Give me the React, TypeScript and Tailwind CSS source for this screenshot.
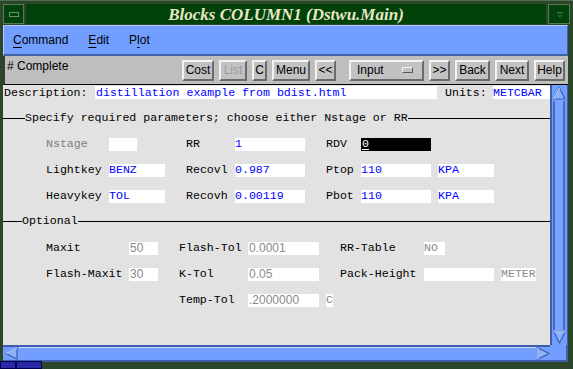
import React from "react";

const MONO = "font-['Liberation_Mono',monospace]";

function Btn({ className, children, disabled }: { className: string; children: React.ReactNode; disabled?: boolean }) {
  return (
    <div
      className={`h-[21px] flex items-center justify-center bg-[#c2c2c2] border-2 border-t-[#f2f2f2] border-l-[#f2f2f2] border-b-[#6a6a6a] border-r-[#6a6a6a] text-[12px] leading-none ${
        disabled ? "text-[#9c9c9c]" : "text-black"
      } ${className}`}
    >
      {children}
    </div>
  );
}

function Legend({ title, lead }: { title: string; lead: string }) {
  return (
    <div className="flex items-center h-[14px]">
      <div className={`h-px bg-black ${lead}`} />
      <span className="leading-none">{title}</span>
      <div className="flex-1 h-px bg-black" />
    </div>
  );
}

function Box({ className, children }: { className: string; children?: React.ReactNode }) {
  return <div className={`h-[13px] bg-white flex items-center leading-none overflow-hidden whitespace-nowrap ${className}`}>{children}</div>;
}

function Arrow({ dir }: { dir: "up" | "down" | "left" | "right" }) {
  const pts = {
    up: "6.5,1 12,12 1,12",
    down: "1,1 12,1 6.5,12",
    left: "1,6.5 12,1 12,12",
    right: "1,1 12,6.5 1,12",
  }[dir];
  return (
    <svg width="13" height="13" viewBox="0 0 13 13" className="shrink-0">
      <polygon points={pts} fill="#8fb2ff" stroke="#3f5fae" strokeWidth="1.2" />
      <polyline
        points={dir === "up" ? "1,12 6.5,1" : dir === "left" ? "1,6.5 12,1" : dir === "down" ? "1,1 12,1" : "1,12 1,1"}
        fill="none"
        stroke="#dce6ff"
        strokeWidth="1"
      />
    </svg>
  );
}

export default function App() {
  return (
    <div className="w-[573px] h-[369px] bg-[#2c462c] flex flex-col overflow-hidden relative font-['Liberation_Sans',Arial,sans-serif]">
      {/* title bar */}
      <div className="h-[25px] flex pt-[3px] pb-px px-[3px] border-t border-t-[#4f6f4f]">
        <div className="w-[21px] bg-[#00420a] border border-[#587858] flex items-center justify-center">
          <div className="w-[10px] h-[5px] border border-[#6f8f6f]" />
        </div>
        <div className="w-[2px]" />
        <div className="flex-1 bg-[#00420a] flex items-center justify-center text-[#e8e6c4] font-['Liberation_Serif',serif] italic font-bold text-[17px] leading-none">
          Blocks COLUMN1 (Dstwu.Main)
        </div>
        <div className="w-[2px]" />
        <div className="w-[22px] bg-[#00420a] border border-[#587858] flex items-center justify-center text-[7px] text-[#8aa28a] leading-none">
          ▽
        </div>
      </div>

      <div className="flex-1 flex flex-col pl-[3px] pr-[5px] pb-[7px] min-h-0">
        {/* menu bar */}
        <div className="h-[31px] shrink-0 bg-[#729fff] border-t border-l border-r border-b-2 border-t-[#b4cbff] border-l-[#b4cbff] border-r-[#41609f] border-b-[#41609f] flex items-center pl-[9px] gap-[20px] text-[12px] text-black">
          <span>
            <span className="underline underline-offset-[3px]">C</span>ommand
          </span>
          <span>
            <span className="underline underline-offset-[3px]">E</span>dit
          </span>
          <span>
            P<span className="underline underline-offset-[3px]">l</span>ot
          </span>
        </div>

        {/* toolbar */}
        <div className="h-[29px] shrink-0 bg-[#bebebe] border-l-2 border-l-[#3a3a3a] border-b border-b-black flex items-center pl-[2px] pr-[3px]">
          <div className="flex-1 text-[12px] text-black leading-none -mt-[9px]"># Complete</div>
          <div className="flex items-center gap-[5px]">
            <Btn className="w-[32px]">Cost</Btn>
            <Btn className="w-[28px]" disabled>
              List
            </Btn>
            <Btn className="w-[15px]">C</Btn>
            <Btn className="w-[38px]">Menu</Btn>
            <Btn className="w-[21px] text-[10px]">&lt;&lt;</Btn>
            <div className="ml-[8px] w-[75px] h-[21px] flex items-center bg-[#c2c2c2] border-2 border-t-[#f2f2f2] border-l-[#f2f2f2] border-b-[#6a6a6a] border-r-[#6a6a6a] text-[12px] leading-none pl-[6px] pr-[9px]">
              <span className="flex-1">Input</span>
              <div className="w-[11px] h-[6px] bg-[#c2c2c2] border border-t-[#f2f2f2] border-l-[#f2f2f2] border-b-[#5a5a5a] border-r-[#5a5a5a]" />
            </div>
            <Btn className="w-[21px] text-[10px]">&gt;&gt;</Btn>
            <Btn className="w-[35px]">Back</Btn>
            <Btn className="w-[34px]">Next</Btn>
            <Btn className="w-[31px]">Help</Btn>
          </div>
        </div>

        {/* content + vertical scrollbar */}
        <div className="flex-1 flex min-h-0">
          <div className={`flex-1 bg-[#e2e2e2] ${MONO} text-[11.6px] text-black flex flex-col`}>
            <div className="h-[15px] flex items-center">
              <div className="w-[92px] pl-px leading-none">Description:</div>
              <Box className="w-[342px] text-[#0000ff] pl-px">distillation example from bdist.html</Box>
              <div className="w-[56px] pl-[8px] leading-none">Units:</div>
              <Box className="flex-1 text-[#0000ff]">METCBAR</Box>
            </div>

            <div className="mt-[11px]">
              <Legend title="Specify required parameters; choose either Nstage or RR" lead="w-[22px]" />
            </div>

            <div className="mt-[6px] flex flex-col">
              <div className="h-[26px] flex items-center pl-[43px]">
                <div className="w-[63px] text-[#7f7f7f]">Nstage</div>
                <div className="w-[77px]">
                  <Box className="w-[28px]" />
                </div>
                <div className="w-[49px]">RR</div>
                <Box className="w-[70px] text-[#0000ff]">1</Box>
                <div className="w-[21px]" />
                <div className="w-[35px]">RDV</div>
                <div className="w-[70px] h-[13px] bg-black text-white flex items-center leading-none pl-px">
                  <span className="border-b border-white">0</span>
                </div>
              </div>
              <div className="h-[26px] flex items-center pl-[43px]">
                <div className="w-[63px]">Lightkey</div>
                <div className="w-[77px]">
                  <Box className="w-[56px] text-[#0000ff]">BENZ</Box>
                </div>
                <div className="w-[49px]">Recovl</div>
                <Box className="w-[70px] text-[#0000ff]">0.987</Box>
                <div className="w-[21px]" />
                <div className="w-[35px]">Ptop</div>
                <Box className="w-[70px] text-[#0000ff]">110</Box>
                <Box className="ml-[7px] w-[56px] text-[#0000ff]">KPA</Box>
              </div>
              <div className="h-[26px] flex items-center pl-[43px]">
                <div className="w-[63px]">Heavykey</div>
                <div className="w-[77px]">
                  <Box className="w-[56px] text-[#0000ff]">TOL</Box>
                </div>
                <div className="w-[49px]">Recovh</div>
                <Box className="w-[70px] text-[#0000ff]">0.00119</Box>
                <div className="w-[21px]" />
                <div className="w-[35px]">Pbot</div>
                <Box className="w-[70px] text-[#0000ff]">110</Box>
                <Box className="ml-[7px] w-[56px] text-[#0000ff]">KPA</Box>
              </div>
            </div>

            <div className="mt-[5px]">
              <Legend title="Optional" lead="w-[19px]" />
            </div>

            <div className="mt-[7px] flex flex-col">
              <div className="h-[26px] flex items-center pl-[43px]">
                <div className="w-[83px]">Maxit</div>
                <div className="w-[50px]">
                  <Box className="w-[29px] text-[#8a8a8a] font-['Liberation_Sans',Arial,sans-serif] text-[12px] pl-px">50</Box>
                </div>
                <div className="w-[69px]">Flash-Tol</div>
                <div className="w-[92px]">
                  <Box className="w-[71px] text-[#8a8a8a] font-['Liberation_Sans',Arial,sans-serif] text-[12px] pl-px">0.0001</Box>
                </div>
                <div className="w-[84px]">RR-Table</div>
                <Box className="w-[21px] text-[#8a8a8a]">NO</Box>
              </div>
              <div className="h-[26px] flex items-center pl-[43px]">
                <div className="w-[83px]">Flash-Maxit</div>
                <div className="w-[50px]">
                  <Box className="w-[29px] text-[#8a8a8a] font-['Liberation_Sans',Arial,sans-serif] text-[12px] pl-px">30</Box>
                </div>
                <div className="w-[69px]">K-Tol</div>
                <div className="w-[92px]">
                  <Box className="w-[71px] text-[#8a8a8a] font-['Liberation_Sans',Arial,sans-serif] text-[12px] pl-px">0.05</Box>
                </div>
                <div className="w-[84px]">Pack-Height</div>
                <Box className="w-[70px]" />
                <Box className="ml-[7px] w-[35px] text-[#8a8a8a]">METER</Box>
              </div>
              <div className="h-[26px] flex items-center pl-[43px]">
                <div className="w-[133px]" />
                <div className="w-[69px]">Temp-Tol</div>
                <Box className="w-[71px] text-[#8a8a8a] font-['Liberation_Sans',Arial,sans-serif] text-[12px] pl-px">.2000000</Box>
                <Box className="ml-[7px] w-[7px] text-[#8a8a8a]">C</Box>
              </div>
            </div>
          </div>

          {/* vertical scrollbar */}
          <div className="w-[18px] bg-[#729fff] flex flex-col border-l-2 border-l-[#3f5fae] border-r border-r-[#3f5fae] pt-[2px] pb-px pl-px">
            <Arrow dir="up" />
            <div className="flex-1 my-px mr-[2px] border-l-2 border-l-[#4a69bb] border-r-2 border-r-[#4a69bb] bg-[#7aa5ff]" />
            <Arrow dir="down" />
          </div>
        </div>

        {/* horizontal scrollbar */}
        <div className="h-[17px] shrink-0 flex">
          <div className="flex-1 flex flex-col bg-[#729fff]">
            <div className="h-[3px]" />
            <div className="flex-1 flex items-center border-t-2 border-t-[#3f5fae] border-b-2 border-b-[#3f5fae] pl-[2px]">
              <Arrow dir="left" />
              <div className="flex-1 h-full border-t border-t-[#c4d4ff] bg-[#729fff] mx-px" />
              <Arrow dir="right" />
            </div>
          </div>
          <div className="w-[18px] bg-[#729fff] border-r-2 border-r-[#3f5fae] border-b-2 border-b-[#3f5fae]" />
        </div>
      </div>

      {/* taskbar stub at the lower-left corner */}
      <div className="absolute left-0 bottom-0 h-[8px] flex">
        <div className="w-[16px] h-full bg-[#2a2aa8] border border-[#000050]" />
        <div className="w-[26px] h-full bg-[#2a2aa8] border border-[#000050]" />
      </div>
    </div>
  );
}
